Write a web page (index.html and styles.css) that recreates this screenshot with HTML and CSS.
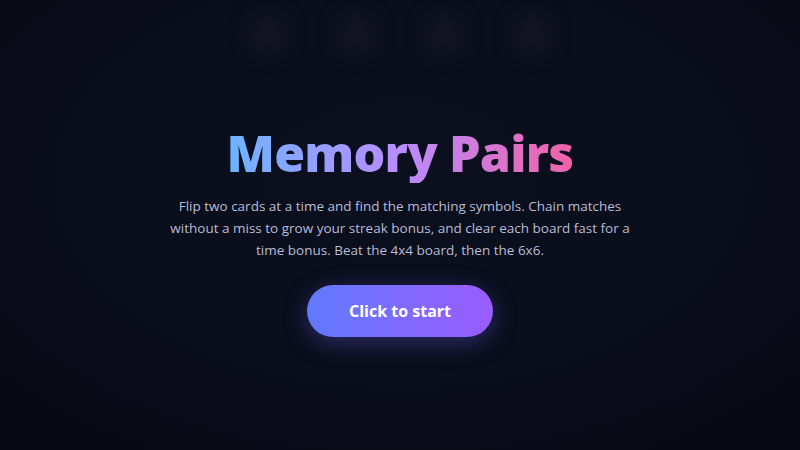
FILE: index.html
```html
<!DOCTYPE html>
<html>
<head>
<meta charset="utf-8">
<link rel="stylesheet" href="styles.css">
</head>
<body>
<div class="deco">
  <div class="ghost"></div>
  <div class="ghost"></div>
  <div class="ghost"></div>
  <div class="ghost"></div>
</div>
<main class="intro">
  <h1 class="title">Memory Pairs</h1>
  <p class="desc">Flip two cards at a time and find the matching symbols. Chain matches without a miss to grow your streak bonus, and clear each board fast for a time bonus. Beat the 4x4 board, then the 6x6.</p>
  <button class="start">Click to start</button>
</main>
</body>
</html>
```
FILE: styles.css
```css
html, body {
  margin: 0;
  height: 100%;
}
body {
  background: radial-gradient(ellipse 70% 75% at 50% 40%, #0c0f1e 0%, #0a0d1a 60%, #070914 100%);
  font-family: "Open Sans", "Noto Sans", sans-serif;
  overflow: hidden;
  position: relative;
}
.deco {
  position: absolute;
  top: 14px;
  left: 0;
  right: 0;
  display: flex;
  justify-content: center;
  gap: 48px;
  filter: blur(9px);
  opacity: 0.7;
}
.ghost {
  width: 40px;
  height: 40px;
  border-radius: 10px;
  background: #161827;
}
.intro {
  box-sizing: border-box;
  height: 100%;
  padding-top: 10px;
  display: flex;
  flex-direction: column;
  align-items: center;
  justify-content: center;
  text-align: center;
}
.title {
  margin: 0;
  font-size: 50px;
  font-weight: 800;
  letter-spacing: -0.8px;
  line-height: 1.2;
  background: linear-gradient(90deg, #6cb4ff 0%, #b98cff 50%, #f062a8 100%);
  -webkit-background-clip: text;
  background-clip: text;
  color: transparent;
}
.desc {
  margin: 12px 0 0;
  width: 470px;
  font-size: 13.5px;
  line-height: 22px;
  color: #b8bcd8;
}
.start {
  margin-top: 24px;
  width: 186px;
  height: 52px;
  border: none;
  border-radius: 26px;
  background: linear-gradient(90deg, #6279ff 0%, #9a5cff 100%);
  color: #fff;
  font-family: "Open Sans", "Noto Sans", sans-serif;
  font-weight: 700;
  font-size: 16px;
  box-shadow: 0 6px 24px rgba(110, 100, 255, 0.35);
}
```
